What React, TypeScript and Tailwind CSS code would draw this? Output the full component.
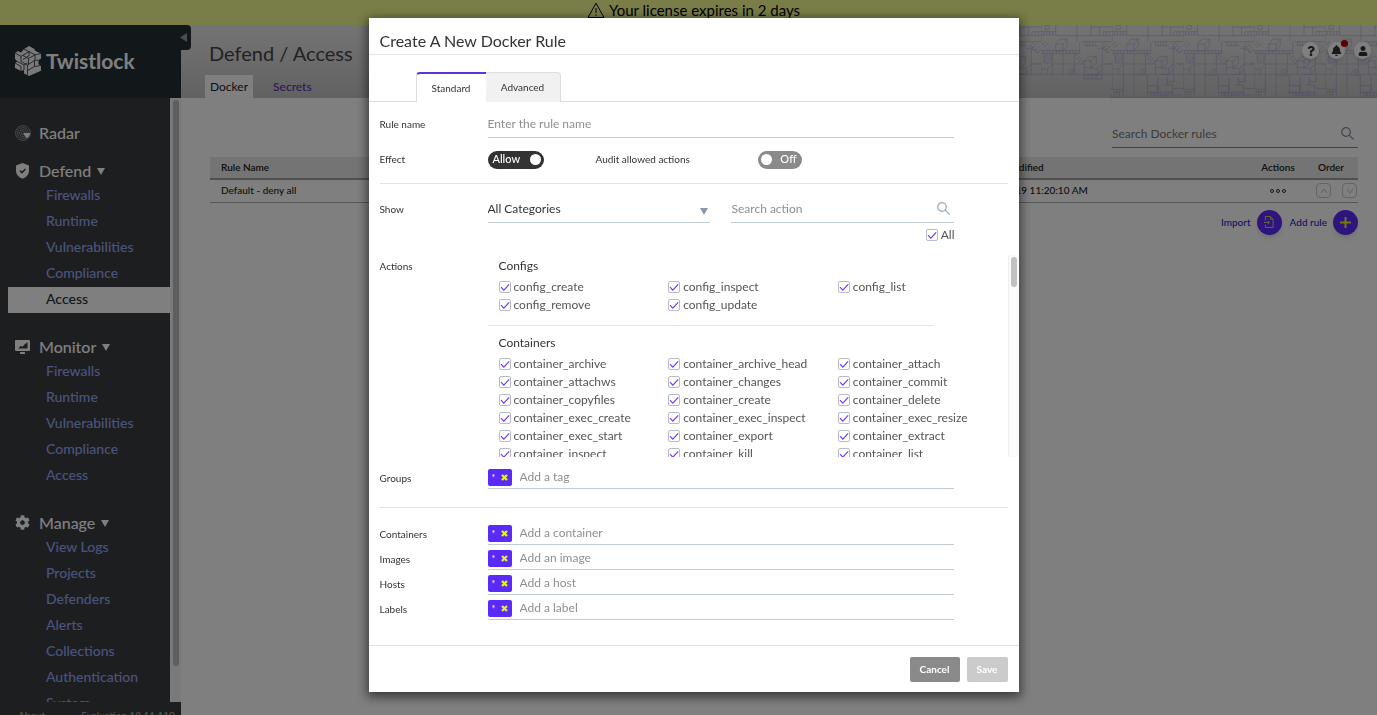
import type { ReactNode } from "react";
import { FaQuestion, FaBell, FaUser, FaCog } from "react-icons/fa";

type Section = { title: string; icon: ReactNode; items: string[]; active?: string };

const sections: Section[] = [
  {
    title: "Defend",
    icon: <ShieldIcon />,
    items: ["Firewalls", "Runtime", "Vulnerabilities", "Compliance", "Access"],
    active: "Access",
  },
  {
    title: "Monitor",
    icon: <MonitorIcon />,
    items: ["Firewalls", "Runtime", "Vulnerabilities", "Compliance", "Access"],
  },
  {
    title: "Manage",
    icon: <FaCog size={15} />,
    items: ["View Logs", "Projects", "Defenders", "Alerts", "Collections", "Authentication", "System"],
  },
];

const actionGroups = [
  {
    title: "Configs",
    actions: ["config_create", "config_inspect", "config_list", "config_remove", "config_update"],
  },
  {
    title: "Containers",
    actions: [
      "container_archive",
      "container_archive_head",
      "container_attach",
      "container_attachws",
      "container_changes",
      "container_commit",
      "container_copyfiles",
      "container_create",
      "container_delete",
      "container_exec_create",
      "container_exec_inspect",
      "container_exec_resize",
      "container_exec_start",
      "container_export",
      "container_extract",
      "container_inspect",
      "container_kill",
      "container_list",
    ],
  },
];

const resources = [
  { id: "containers", label: "Containers", placeholder: "Add a container" },
  { id: "images", label: "Images", placeholder: "Add an image" },
  { id: "hosts", label: "Hosts", placeholder: "Add a host" },
  { id: "labels", label: "Labels", placeholder: "Add a label" },
];

function ShieldIcon() {
  return (
    <svg width="15" height="16" viewBox="0 0 15 16" aria-hidden="true">
      <path d="M7.500 0 14 2.400v5.200c0 4-2.600 6.800-6.500 8.200C3.600 14.400 1 11.600 1 7.600V2.400z" fill="currentColor" />
      <path d="M5 7.600l2 2 3.400-3.600" fill="none" stroke="#3a3d41" strokeWidth="1.500" />
    </svg>
  );
}

function MonitorIcon() {
  return (
    <svg width="15" height="14" viewBox="0 0 15 14" aria-hidden="true">
      <rect x="0" y="0" width="15" height="11" rx="1" fill="currentColor" />
      <rect x="5" y="12" width="5" height="2" rx="0.500" fill="currentColor" />
      <path d="M3 8.500 6 5.800l1.500 1L10 4l2.500-1.800v6.300z" fill="#3a3d41" />
    </svg>
  );
}

function RadarIcon() {
  return (
    <svg width="16" height="16" viewBox="0 0 16 16" fill="none" stroke="#a8a8a8" strokeWidth="0.800" aria-hidden="true">
      <circle cx="8" cy="8" r="7.400" />
      <circle cx="8" cy="8" r="5.400" />
      <circle cx="8" cy="8" r="3.500" />
      <circle cx="8" cy="8" r="1.600" />
      <path d="M8 8h7.400a7.400 7.400 0 0 1-3.700 5.400z" fill="#ffffff" stroke="none" />
    </svg>
  );
}

function Logo() {
  return (
    <svg width="27" height="30" viewBox="0 0 27 30" aria-hidden="true">
      <path
        d="M14 0l5 2.800 1.500 2.200 5.500 2.500v5l-2.500 1.800v4l2.500 1.500v5L14 30l-5-2.500v-3.500L6 25l-6-3v-5l2.500-1.500L0 13V7l3-2 3 1.500L9 3z"
        fill="#f2f2f2"
      />
      <g fill="none" stroke="#242e34" strokeWidth="0.800">
        <path d="M0 7l6 3.400v5l6.500 3.600v10.500M9 3l5 2.600v4.400L8 13.400M6 10.400l8-4.800M14 5.600l6 3.200-6.500 3.700M20 8.800l6-1.300M20 8.800v5.400l-7.500 4.800M13.500 12.500L8 9.500M13.500 12.500v6M20 14.200l3.500.1M2.500 15.500L9 19v5M9 19l3.500-2M12.500 24.500l7-4v-6M19.500 20.500l6.500-1M0 17l6 3.500V25" />
      </g>
    </svg>
  );
}

function Caret({ className, color }: { className?: string; color: string }) {
  return (
    <svg width="8" height="7" viewBox="0 0 8 7" className={className} aria-hidden="true">
      <path d="M0 0h8L4 7z" fill={color} />
    </svg>
  );
}

function SearchIcon({ color }: { color: string }) {
  return (
    <svg width="13" height="13" viewBox="0 0 13 13" fill="none" stroke={color} strokeWidth="1.200" strokeLinecap="round" aria-hidden="true">
      <circle cx="5" cy="5" r="4.300" />
      <path d="M8.200 8.200l4 4" />
    </svg>
  );
}

function BlocksPattern() {
  return (
    <svg className="pointer-events-none absolute inset-y-0 right-0 h-full w-[359px]" aria-hidden="true">
      <defs>
        <pattern id="blocks" x="23" y="0" width="71" height="50" patternUnits="userSpaceOnUse">
          <g fill="none" stroke="#9c9cce" strokeOpacity="0.6" strokeWidth="2.400" transform="scale(0.3333)">
            <path d="M12 1h13v12H12zM0 0v50M44 0v30M0 20h44M0 30h44M8 20v10M17 20v10M26 20v10M35 20v10M44 32h169M108 0v50M150 0v32M150 6h63M176 6v26M186 20h27M186 20v12M195 20v12M204 20v12" />
            <path d="M44 57h22v20H44zM44 57l13-15h22L66 57M79 42v20L66 77" />
            <path d="M0 77h116M0 86h116M6 77v9M16 77v9M26 77v9M36 77v9M46 77v9M56 77v9M66 77v9M76 77v9M86 77v9M96 77v9M106 77v9M116 50v36M120 50h93M130 50v12h40M138 50v12M146 50v12M154 50v12M162 50v12" />
            <path d="M180 66l12-14M186 72l14-16M194 78l14-16M202 84l11-13M180 66h8v8h8v8h10M2 60l12-12M8 68l14-14M10 100l10-12M12 108l14-16M16 114l14-16M100 96l12-10M106 104l12-12M112 112l14-14M120 118l12-12M10 88v26h20V88" />
            <path d="M34 86v62M66 86v62M100 86v62M34 117h96M0 112v36M184 86v62M184 117h29M170 70h14v16" />
            <path d="M130 108h20v20h-20zM130 108l14-14h22l-16 14M166 94v22l-16 12M148 130h22v18h-22M170 130l14-14M184 132l-14 16M130 128v20M200 117h13M0 132h20v16M20 132l12-14M78 148l8-14h14M86 148l10-12M92 148l8-10" />
            <path d="M0 148h213" />
          </g>
        </pattern>
        <pattern id="blocksLower" x="23" y="50" width="71" height="23" patternUnits="userSpaceOnUse">
          <g fill="none" stroke="#9090c4" strokeOpacity="0.6" strokeWidth="2.400" transform="scale(0.3333)">
            <path d="M0 0v43M34 0v67M66 0v67M66 0h40v67M106 32h32v20M138 4v44M106 52h30M116 52v15M126 52v15M136 52v15M146 52v15M118 52h64M118 60h95M156 30h26v30M166 6v24M166 20h20M186 0v20M186 40h27M0 43h34M6 50h28M6 50v17M14 50v17M22 50v17M150 67l12-14M160 67l12-14M0 67h213" />
          </g>
        </pattern>
      </defs>
      <rect x="0" y="0" width="359" height="50" fill="url(#blocks)" />
      <path d="M66 50h18v4H66zM70 50v4M74 50v4M78 50v4" fill="none" stroke="#9090c4" strokeOpacity="0.6" strokeWidth="0.800" />
      <rect x="92" y="50" width="267" height="23" fill="url(#blocksLower)" />
    </svg>
  );
}

function Sidebar() {
  return (
    <aside className="relative z-10 flex w-[181px] shrink-0 flex-col">
      <div className="relative flex h-[73px] shrink-0 items-center gap-1 bg-[#242e34] pb-[2px] pl-[15px] text-white">
        <Logo />
        <span className="text-[21px] font-bold leading-7">Twistlock</span>
        <button
          type="button"
          aria-label="Collapse menu"
          className="absolute -right-[10px] top-0 flex h-[25px] w-4 items-center rounded-r-sm bg-[#242e34] pl-[5px]"
        >
          <svg width="7" height="9" viewBox="0 0 7 9" aria-hidden="true">
            <path d="M7 0v9L0 4.500z" fill="#9a9a9a" />
          </svg>
        </button>
      </div>
      <div className="flex min-h-0 flex-1">
        <nav className="flex-1 overflow-hidden bg-[#3a3d41] pt-[23px] font-medium">
          <a href="#radar" className="mb-[14px] flex h-6 items-center pl-[15px] text-base text-white">
            <span className="w-6">
              <RadarIcon />
            </span>
            Radar
          </a>
          <div className="flex flex-col gap-[22px]">
            {sections.map((section) => (
              <section key={section.title}>
                <button type="button" className="flex h-6 items-center pb-px pl-[15px] text-base text-white">
                  <span className="w-6">{section.icon}</span>
                  {section.title}
                  <Caret className="ml-[6px] mt-[2px]" color="#ffffff" />
                </button>
                <ul>
                  {section.items.map((item) => (
                    <li key={item}>
                      <a
                        href={`#${section.title}-${item}`}
                        className={
                          item === section.active
                            ? "ml-2 flex h-[26px] items-center bg-white pb-[2px] pl-[38px] text-sm text-[#242e34]"
                            : "ml-2 flex h-[26px] items-center pb-[2px] pl-[38px] text-sm text-[#98a6f5]"
                        }
                      >
                        {item}
                      </a>
                    </li>
                  ))}
                </ul>
              </section>
            ))}
          </div>
        </nav>
        <div className="w-[11px] bg-[#f4f4f4] px-[3px] pt-[2px]">
          <div className="h-[94%] w-[6px] rounded-full bg-[#bcbcbc]" />
        </div>
      </div>
      <footer className="flex h-[13px] shrink-0 gap-9 overflow-hidden bg-[#3a3d41] pl-[18px] pt-[7px] text-[10px] leading-3 text-[#b4b4b4]">
        <span>About</span>
        <span>Evaluation 18.11.110</span>
      </footer>
    </aside>
  );
}

function RoundIcon({ label, children }: { label: string; children: ReactNode }) {
  return (
    <button
      type="button"
      aria-label={label}
      className="relative flex size-[17px] items-center justify-center rounded-full bg-white text-[#333] shadow-md"
    >
      {children}
    </button>
  );
}

function Page() {
  return (
    <main className="flex min-w-0 flex-1 flex-col bg-white">
      <header className="relative flex h-[73px] shrink-0 flex-col justify-between bg-linear-to-b from-[#e8e8e8] to-[#c4c4c6] pl-6">
        <BlocksPattern />
        <h1 className="pl-1 pt-[14px] text-xl leading-7 text-[#444]">Defend / Access</h1>
        <div className="flex h-[23px] text-xs">
          <a href="#docker" className="flex items-center bg-white px-[5px] text-[#222]">
            Docker
          </a>
          <a href="#secrets" className="ml-4 flex items-center px-1 font-medium text-[#5533bb]">
            Secrets
          </a>
        </div>
        <div className="absolute right-[6px] top-[17px] flex gap-[9px]">
          <RoundIcon label="Help">
            <FaQuestion size={10} />
          </RoundIcon>
          <RoundIcon label="Alerts">
            <FaBell size={11} />
            <span className="absolute -right-[3px] -top-[2px] size-[7px] rounded-full bg-[#b00000]" />
          </RoundIcon>
          <RoundIcon label="Account">
            <FaUser size={10} />
          </RoundIcon>
        </div>
      </header>
      <div className="flex flex-col pl-[29px] pr-[19px] pt-[22px]">
        <label className="mb-[9px] flex h-7 w-[246px] items-center self-end border-b border-[#7d8a90] pr-1">
          <input
            type="text"
            aria-label="Search Docker rules"
            placeholder="Search Docker rules"
            className="min-w-0 flex-1 bg-transparent text-xs text-[#333] outline-none placeholder:text-[#777]"
          />
          <SearchIcon color="#7d8a99" />
        </label>
        <table className="w-full table-fixed text-[10px] text-[#222]">
          <thead>
            <tr className="h-[22px] border-b-2 border-[#a0a0a0] bg-[#e8e8e8] text-left">
              <th className="w-[65%] pl-[11px] font-semibold">Rule Name</th>
              <th className="pl-[27px] font-semibold">Last Modified</th>
              <th className="w-[52px] text-center font-semibold">Actions</th>
              <th className="w-[54px] text-center font-semibold">Order</th>
            </tr>
          </thead>
          <tbody>
            <tr className="h-[23px] border-b border-[#b0b0b0] font-medium">
              <td className="pl-[11px]">Default - deny all</td>
              <td className="pl-[27px]">1/7/2019 11:20:10 AM</td>
              <td>
                <button type="button" aria-label="Rule actions" className="mx-auto flex gap-[2px]">
                  <span className="size-1 rounded-full border border-[#333]" />
                  <span className="size-1 rounded-full border border-[#333]" />
                  <span className="size-1 rounded-full border border-[#333]" />
                </button>
              </td>
              <td>
                <div className="flex justify-end gap-[11px] pr-px">
                  <button type="button" aria-label="Move up" className="flex size-[15px] items-center justify-center rounded border border-[#c8c8c8]">
                    <svg width="8" height="6" viewBox="0 0 8 6" fill="none" stroke="#c4c4c4" aria-hidden="true">
                      <path d="M1 5l3-4 3 4" />
                    </svg>
                  </button>
                  <button type="button" aria-label="Move down" className="flex size-[15px] items-center justify-center rounded border border-[#c8c8c8]">
                    <svg width="8" height="6" viewBox="0 0 8 6" fill="none" stroke="#c4c4c4" aria-hidden="true">
                      <path d="M1 1l3 4 3-4" />
                    </svg>
                  </button>
                </div>
              </td>
            </tr>
          </tbody>
        </table>
        <div className="mt-[7px] flex justify-end gap-2 text-[10px] font-medium text-[#2a22c8]">
          <button type="button" className="flex items-center gap-[6px]">
            Import
            <span className="flex size-[25px] items-center justify-center rounded-full bg-[#5b2bfa] shadow-md">
              <svg width="10" height="12" viewBox="0 0 11 13" fill="none" stroke="#d8d860" aria-hidden="true">
                <path d="M1.500 4.500v-4H7L10 3.500v9H1.500v-3M7 .500v3h3M0 7h6M4 5l2 2-2 2" />
              </svg>
            </span>
          </button>
          <button type="button" className="flex items-center gap-[6px]">
            Add rule
            <span className="flex size-[25px] items-center justify-center rounded-full bg-[#5b2bfa] shadow-md">
              <svg width="11" height="11" viewBox="0 0 11 11" fill="none" stroke="#e8f020" strokeWidth="2" aria-hidden="true">
                <path d="M5.500 0v11M0 5.500h11" />
              </svg>
            </span>
          </button>
        </div>
      </div>
    </main>
  );
}

function Check({ label }: { label: string }) {
  return (
    <label className="flex h-[18px] items-center gap-[3px] text-xs text-[#555]">
      <span className="relative flex size-3">
        <input
          type="checkbox"
          defaultChecked
          className="peer size-3 appearance-none rounded-xs border border-[#b4becb] bg-white"
        />
        <svg
          viewBox="0 0 12 12"
          className="pointer-events-none absolute inset-0 hidden size-3 peer-checked:block"
          fill="none"
          stroke="#6a3dff"
          strokeWidth="1.200"
          aria-hidden="true"
        >
          <path d="M2 6.200l2.800 2.900L10.200 3.400" />
        </svg>
      </span>
      {label}
    </label>
  );
}

function TagField({ id, label, placeholder }: { id: string; label: string; placeholder: string }) {
  return (
    <div className="flex h-[25px] items-center">
      <label htmlFor={id} className="w-[108px]">
        {label}
      </label>
      <div className="flex h-[21px] w-[466px] items-start border-b border-[#c3cbd3] pt-px">
        <span className="flex h-[17px] w-6 items-center justify-between rounded-xs bg-[#5a2bf8] pl-1 pr-1 text-[9px] leading-4 text-white">
          *
          <button type="button" aria-label={`Remove * from ${label}`}>
            <svg width="7" height="7" viewBox="0 0 7 7" stroke="#e8f020" strokeWidth="2.200" aria-hidden="true">
              <path d="M1 1l5 5M6 1l-5 5" />
            </svg>
          </button>
        </span>
        <input
          id={id}
          type="text"
          placeholder={placeholder}
          className="h-4 min-w-0 flex-1 pb-px pl-2 text-xs outline-none placeholder:text-[#8f8f8f]"
        />
      </div>
    </div>
  );
}

function RuleDialog() {
  return (
    <div
      role="dialog"
      aria-modal="true"
      aria-labelledby="dialog-title"
      className="w-[650px] bg-white text-[10px] text-[#333] shadow-[0_3px_10px_2px_rgba(0,0,0,0.55)]"
    >
      <h2 id="dialog-title" className="flex h-[37px] items-end border-b border-[#dfe6ec] pb-[1px] pl-[11px] text-base leading-6 text-[#333]">
        Create A New Docker Rule
      </h2>
      <div role="tablist" className="flex h-[47px] items-end border-b border-[#d9dde0] pl-[47px]">
        <button
          type="button"
          role="tab"
          aria-selected="true"
          className="-mb-px h-[30px] w-[70px] rounded-tl-sm border-l border-t-2 border-l-[#ddd] border-t-[#5a35d8] bg-white"
        >
          Standard
        </button>
        <button
          type="button"
          role="tab"
          aria-selected="false"
          className="-mb-px h-[30px] w-[75px] rounded-tr-sm border-r border-t border-[#ddd] bg-[#f1f1f1]"
        >
          Advanced
        </button>
      </div>

      <div className="pl-[11px]">
        <div className="mr-[11px] border-b border-[#e2e2e2]">
          <div className="flex h-[36px] items-end">
            <label htmlFor="rule-name" className="w-[108px] pb-[6px] leading-4">
              Rule name
            </label>
            <input
              id="rule-name"
              type="text"
              placeholder="Enter the rule name"
              className="h-[26px] w-[466px] border-b border-[#c3cbd3] pb-[2px] text-xs outline-none placeholder:text-[#8f8f8f]"
            />
          </div>
          <div className="flex h-[45px] items-center pb-[2px]">
            <span id="effect-label" className="w-[108px]">
              Effect
            </span>
            <button
              type="button"
              role="switch"
              aria-checked="true"
              aria-labelledby="effect-label"
              className="flex h-[18px] w-14 items-center justify-between rounded-full bg-[#333] pl-[5px] pr-[3px] text-[11px] font-medium text-white"
            >
              Allow
              <span className="size-[11px] rounded-full bg-white" />
            </button>
            <span id="audit-label" className="ml-[52px] w-[162px]">
              Audit allowed actions
            </span>
            <button
              type="button"
              role="switch"
              aria-checked="false"
              aria-labelledby="audit-label"
              className="flex h-[18px] w-11 items-center justify-between rounded-full bg-[#8a8a8a] pl-[3px] pr-[5px] text-[11px] font-medium text-white"
            >
              <span className="size-[11px] rounded-full bg-white" />
              Off
            </button>
          </div>
        </div>

        <div className="flex h-[39px] items-end">
          <label htmlFor="category" className="w-[108px] pb-[6px] leading-4">
            Show
          </label>
          <div className="relative mr-[21px] w-[222px]">
            <select id="category" className="block h-[26px] w-full appearance-none border-b border-[#c3cbd3] bg-white pb-[2px] text-xs outline-none">
              <option>All Categories</option>
            </select>
            <Caret className="pointer-events-none absolute right-[2px] top-[11px]" color="#8a9aa8" />
          </div>
          <div className="flex h-[26px] w-[223px] items-center border-b border-[#c3cbd3] pb-[2px] pl-px pr-1">
            <input
              type="text"
              aria-label="Search action"
              placeholder="Search action"
              className="min-w-0 flex-1 text-xs outline-none placeholder:text-[#8f8f8f]"
            />
            <SearchIcon color="#9aa7b5" />
          </div>
        </div>
        <div className="mb-[11px] mr-16 mt-[3px] flex justify-end">
          <Check label="All" />
        </div>

        <div className="flex h-[202px]">
          <span className="w-[108px] pt-[3px] leading-4">Actions</span>
          <div className="flex-1 overflow-hidden">
            {actionGroups.map((group, index) => (
              <section key={group.title} aria-label={group.title} className={index > 0 ? "pl-[11px] pt-[9px]" : "pl-[11px] pt-[3px]"}>
                <h3 className="mb-1 text-xs leading-4 text-[#333]">{group.title}</h3>
                <div className="grid grid-cols-3">
                  {group.actions.map((action) => (
                    <Check key={action} label={action} />
                  ))}
                </div>
                {index < actionGroups.length - 1 && <hr className="-ml-[11px] mr-[74px] mt-[11px] border-[#dfe6ec]" />}
              </section>
            ))}
          </div>
          <div className="w-[11px] border-l border-[#eee] bg-[#fafafa] pl-[2px] pt-[2px]">
            <div className="h-[30px] w-[6px] rounded-full bg-[#c1c1c1]" />
          </div>
        </div>

        <div className="mr-[11px] border-b border-[#e2e2e2] pb-[16px] pt-[9px]">
          <TagField id="groups" label="Groups" placeholder="Add a tag" />
        </div>
        <div className="pb-[23px] pt-[14px]">
          {resources.map((resource) => (
            <TagField key={resource.id} {...resource} />
          ))}
        </div>
      </div>

      <footer className="flex justify-end gap-[7px] border-t border-[#dfe3e6] pb-[10px] pr-[11px] pt-[11px] font-bold text-white">
        <button type="button" className="h-[25px] w-[50px] rounded-xs bg-[#8a8a8a]">
          Cancel
        </button>
        <button type="button" className="h-[25px] w-[41px] rounded-xs bg-[#cbcbcb]">
          Save
        </button>
      </footer>
    </div>
  );
}

export default function App() {
  return (
    <div className="flex h-screen flex-col overflow-hidden font-[Lato,sans-serif]">
      <div className="flex h-[25px] shrink-0 items-start justify-center gap-1 bg-[#f2fc90] pl-[10px] text-[15px] leading-5 text-black">
        <svg width="18" height="17" viewBox="0 0 18 17" fill="none" stroke="#000" aria-hidden="true" className="mt-[2px]">
          <path d="M9 1.200L17 15.500H1zM9 6v5M9 12.500v1.200" />
        </svg>
        Your license expires in 2 days
      </div>
      <div className="flex min-h-0 flex-1">
        <Sidebar />
        <Page />
      </div>
      <div className="fixed inset-0 z-20 flex items-start justify-center bg-black/50 pl-[10px] pt-[18px]">
        <RuleDialog />
      </div>
    </div>
  );
}
